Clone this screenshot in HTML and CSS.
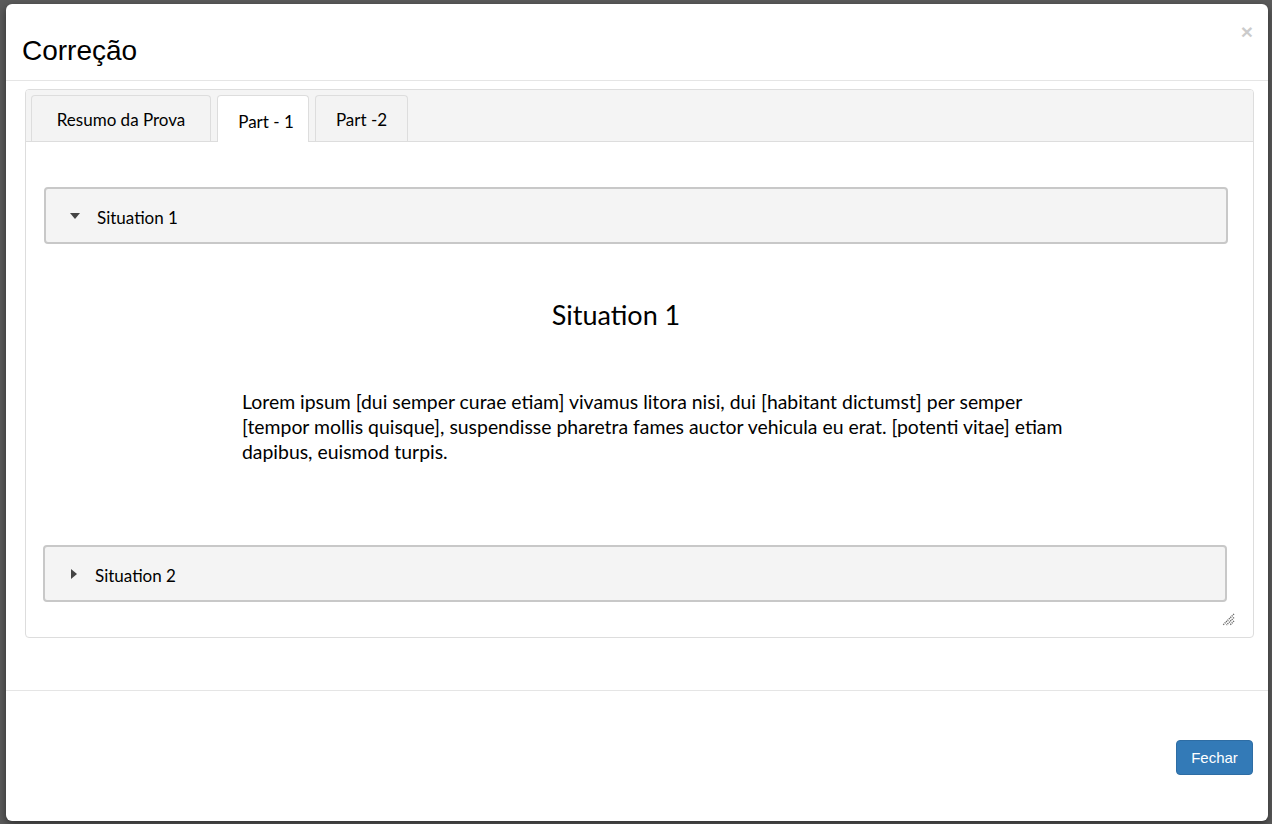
FILE: index.html
```html
<!DOCTYPE html>
<html lang="pt">
<head>
<meta charset="utf-8">
<title>Correção</title>
<link rel="stylesheet" href="styles.css">
</head>
<body>
<div class="backdrop">
  <div class="modal">
    <div class="modal-header">
      <h4 class="modal-title">Correção</h4>
      <button class="close" type="button">×</button>
    </div>
    <div class="modal-body">
      <div class="tabs">
        <ul class="tab-nav">
          <li class="tab tab-1">Resumo da Prova</li>
          <li class="tab tab-2 active">Part - 1</li>
          <li class="tab tab-3">Part -2</li>
        </ul>
        <div class="tab-panel">
          <div class="acc-header">
            <svg class="caret" width="10" height="6" viewBox="0 0 10 6"><path d="M0 0H10L5 6Z" fill="#444"/></svg>
            <span>Situation 1</span>
          </div>
          <div class="acc-content">
            <h3 class="situation-title">Situation 1</h3>
            <p class="situation-text">Lorem ipsum [dui semper curae etiam] vivamus litora nisi, dui [habitant dictumst] per semper [tempor mollis quisque], suspendisse pharetra fames auctor vehicula eu erat. [potenti vitae] etiam dapibus, euismod turpis.</p>
          </div>
          <div class="acc-header acc-collapsed">
            <svg class="caret caret-right" width="6" height="10" viewBox="0 0 6 10"><path d="M0 0V10L6 5Z" fill="#444"/></svg>
            <span>Situation 2</span>
          </div>
          <div class="resize-row">
            <svg class="resize" width="13" height="13" viewBox="0 0 13 13">
              <path d="M12 1L1 12M12 4.5L4.5 12M12 8L8 12" stroke="#666" stroke-width="1.4" stroke-dasharray="1.2 0.8"/>
            </svg>
          </div>
        </div>
      </div>
    </div>
    <div class="modal-footer">
      <button class="btn-primary" type="button">Fechar</button>
    </div>
  </div>
</div>
</body>
</html>
```

FILE: styles.css
```css
html, body {
  margin: 0;
  padding: 0;
  height: 824px;
  overflow: hidden;
}
body {
  background: #5b5b5b;
  font-family: Lato, "Open Sans", sans-serif;
  color: #000;
}
.backdrop {
  padding: 4px 4px 0 6px;
}
.modal {
  width: 1262px;
  height: 817px;
  background: #fff;
  border-radius: 6px;
  box-shadow: 0 3px 9px rgba(0,0,0,0.5);
  display: flex;
  flex-direction: column;
  box-sizing: border-box;
}
.modal-header {
  position: relative;
  height: 77px;
  box-sizing: border-box;
  border-bottom: 1px solid #e5e5e5;
  padding: 32px 16px 0 16px;
}
.modal-title {
  margin: 0;
  font-family: "Liberation Sans", Arial, sans-serif;
  font-weight: normal;
  font-size: 28px;
  line-height: 30px;
}
.close {
  position: absolute;
  top: 17px;
  right: 15px;
  border: 0;
  background: none;
  padding: 0;
  font-family: "Liberation Sans", Arial, sans-serif;
  font-size: 21px;
  font-weight: bold;
  line-height: 1;
  color: #000;
  opacity: 0.2;
}
.modal-body {
  padding: 8px 14px 0 19px;
  height: 609px;
  box-sizing: border-box;
}
.tabs {
  border: 1px solid #ddd;
  border-radius: 4px;
  height: 549px;
  box-sizing: border-box;
  overflow: hidden;
}
.tab-nav {
  list-style: none;
  margin: 0;
  padding: 5px 0 0 5px;
  height: 52px;
  box-sizing: border-box;
  background: #f4f4f4;
  border-bottom: 1px solid #ddd;
  display: flex;
  gap: 6px;
  align-items: flex-end;
}
.tab {
  height: 46px;
  box-sizing: border-box;
  border: 1px solid #ddd;
  border-bottom: 0;
  border-radius: 4px 4px 0 0;
  background: #f3f3f3;
  font-size: 17px;
  line-height: 48px;
  text-align: center;
}
.tab-1 { width: 180px; }
.tab-2 { width: 92px; padding-left: 6px; }
.tab-3 { width: 93px; }
.tab.active {
  background: #fff;
  height: 47px;
  margin-bottom: -1px;
  line-height: 52px;
}
.tab-panel {
  padding: 45px 25px 0 18px;
}
.acc-header {
  height: 57px;
  box-sizing: border-box;
  border: 2px solid #c8c8c8;
  border-radius: 4px;
  background: #f4f4f4;
  display: flex;
  align-items: center;
  padding: 3px 0 0 24px;
  font-size: 17px;
}
.caret {
  margin: -3px 17px 0 0;
  flex: none;
}
.caret-right {
  margin-left: 2px;
  margin-right: 18px;
}
.acc-collapsed {
  margin-left: -1px;
  margin-right: 1px;
}
.acc-content {
  height: 301px;
  box-sizing: border-box;
  padding: 54px 0 0 198px;
}
.situation-title {
  margin: 0;
  width: 748px;
  text-align: center;
  font-weight: normal;
  font-size: 27px;
  line-height: 34px;
}
.situation-text {
  margin: 57px 0 0 0;
  width: 828px;
  font-size: 19.4px;
  line-height: 25px;
}
.resize-row {
  display: flex;
  justify-content: flex-end;
  padding: 11px 0 0 0;
  margin-right: -7px;
}
.modal-footer {
  border-top: 1px solid #e5e5e5;
  flex: 1;
  display: flex;
  justify-content: flex-end;
  align-items: flex-start;
  padding: 49px 15px 0 0;
}
.btn-primary {
  width: 77px;
  height: 35px;
  border: 1px solid #2e6da4;
  border-radius: 4px;
  background: #337ab7;
  color: #fff;
  font-family: "Liberation Sans", Arial, sans-serif;
  font-size: 15px;
  padding: 0;
}
```
